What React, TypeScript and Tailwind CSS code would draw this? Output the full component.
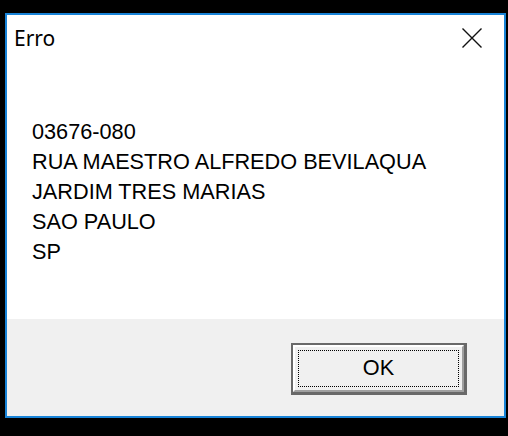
export default function App() {
  const linhas = [
    "03676-080",
    "RUA MAESTRO ALFREDO BEVILAQUA",
    "JARDIM TRES MARIAS",
    "SAO PAULO",
    "SP",
  ];

  return (
    <div className="w-[508px] h-[436px] bg-black pt-[13px] pl-[5px] overflow-hidden">
      {/* janela do alerta */}
      <div className="w-[501px] h-[405px] border-2 border-[#1883d7] bg-white flex flex-col">
        <div className="h-[52px] flex justify-between">
          <span className="pl-[7px] pt-[8px] text-[21px] leading-[30px] text-black font-['Noto_Sans',sans-serif]">
            Erro
          </span>
          <svg width="20" height="20" viewBox="0 0 20 20" className="mt-[13px] mr-[22px]">
            <path d="M0.5 0.5 L19.5 19.5 M19.5 0.5 L0.5 19.5" stroke="#111" strokeWidth="1.4" fill="none" />
          </svg>
        </div>

        <div className="flex-1 pl-[25px] pt-[50px] font-['Liberation_Sans',Arial,sans-serif] text-[21.7px] leading-[30px] text-black">
          {linhas.map((l) => (
            <div key={l}>{l}</div>
          ))}
        </div>

        <div className="h-[97px] bg-[#f0f0f0] flex justify-end pt-[24px] pr-[37px]">
          <button className="w-[176px] h-[52px] border-2 border-[#696969] border-b-[3px] border-r-[3px] bg-[#f0f0f0]">
            <div className="w-full h-full border-2 border-white border-b-[#a0a0a0] border-r-[#a0a0a0] p-[3px]">
              <div className="w-full h-full border border-dotted border-black flex items-center justify-center font-['Liberation_Sans',Arial,sans-serif] text-[21.7px] text-black">
                OK
              </div>
            </div>
          </button>
        </div>
      </div>
    </div>
  );
}
